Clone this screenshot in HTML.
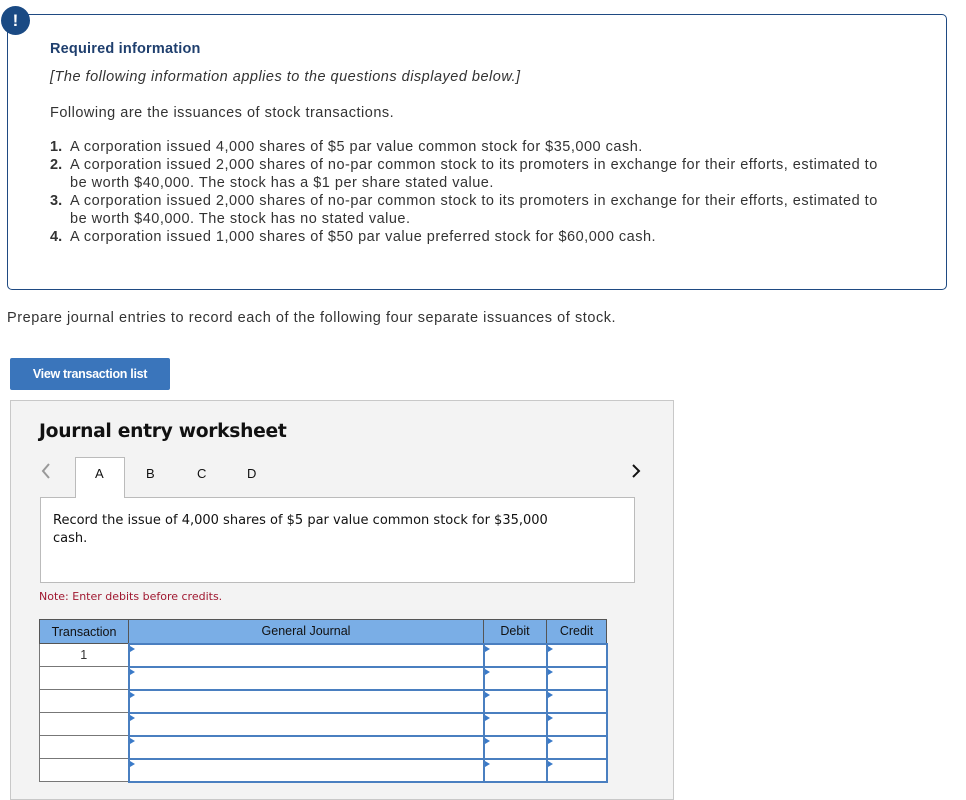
<!DOCTYPE html>
<html><head><meta charset="utf-8"><style>
*{box-sizing:border-box;margin:0;padding:0}
body{width:966px;height:784px;overflow:hidden;background:#fff;font-family:"Liberation Sans",Arial,sans-serif;position:relative;color:#333}
.info{position:absolute;left:7px;top:14px;width:940px;height:276px;border:1px solid #1f4a82;border-radius:5px}
.badge{position:absolute;left:1px;top:6px;width:29px;height:29px;border-radius:50%;background:#1a4a84;color:#fff;font-weight:bold;font-size:17px;text-align:center;line-height:29px}
.t{position:absolute;font-size:14.5px;color:#333;letter-spacing:0.5px}
ol{position:absolute;left:50px;top:138px;width:842px;font-size:14.5px;line-height:18px;list-style:none;letter-spacing:0.5px}
ol li{padding-left:20px;text-indent:-20px}
ol b{display:inline-block;width:20px;text-indent:0;letter-spacing:0}
.btn{position:absolute;left:10px;top:358px;width:160px;height:32px;background:#3a75bb;border-radius:2px;color:#fff;font-weight:bold;font-size:12.5px;line-height:32px;text-align:center;letter-spacing:-0.3px}
.panel{position:absolute;left:10px;top:400px;width:664px;height:400px;background:#f3f3f3;border:1px solid #c8c8c8}
.h{position:absolute;left:39px;top:421px;font-size:18.7px;font-weight:bold;color:#111;font-family:"DejaVu Sans",sans-serif;letter-spacing:-0.3px}
.tab{position:absolute;top:466px;font-size:13px;color:#111}
.tabA{position:absolute;left:75px;top:457px;width:50px;height:41px;background:#fff;border:1px solid #bbb;border-bottom:none;z-index:2}
.box{position:absolute;left:40px;top:497px;width:595px;height:86px;background:#fff;border:1px solid #bbb;font-family:"DejaVu Sans",sans-serif;font-size:13px;color:#111;padding:14px 12px;line-height:18px}
.note{position:absolute;left:39px;top:590px;font-family:"DejaVu Sans",sans-serif;font-size:11px;color:#a01830}
table{position:absolute;left:39px;top:619px;border-collapse:collapse;font-size:12.5px}
th{background:#7aaee6;border:1px solid #555;height:24px;font-weight:normal;color:#111}
td{height:23px;border:1px solid #777;background:#fff;position:relative}
td.i{border:2px solid #4a7fc0}
td.i:before{content:"";position:absolute;left:0;top:1px;border-left:5px solid #3a7ac8;border-top:3px solid transparent;border-bottom:3px solid transparent}
</style></head><body>
<div class="info"></div>
<div class="badge">!</div>
<div class="t" style="left:50px;top:41px;font-weight:bold;color:#1f3f6e;letter-spacing:0.2px">Required information</div>
<div class="t" style="left:50px;top:69px;font-style:italic">[The following information applies to the questions displayed below.]</div>
<div class="t" style="left:50px;top:105px">Following are the issuances of stock transactions.</div>
<ol>
<li><b>1.</b>A corporation issued 4,000 shares of $5 par value common stock for $35,000 cash.</li>
<li><b>2.</b>A corporation issued 2,000 shares of no-par common stock to its promoters in exchange for their efforts, estimated to be worth $40,000. The stock has a $1 per share stated value.</li>
<li><b>3.</b>A corporation issued 2,000 shares of no-par common stock to its promoters in exchange for their efforts, estimated to be worth $40,000. The stock has no stated value.</li>
<li><b>4.</b>A corporation issued 1,000 shares of $50 par value preferred stock for $60,000 cash.</li>
</ol>
<div class="t" style="left:7px;top:310px;letter-spacing:0.55px">Prepare journal entries to record each of the following four separate issuances of stock.</div>
<div class="btn">View transaction list</div>
<div class="panel"></div>
<div class="h">Journal entry worksheet</div>
<svg style="position:absolute;left:40px;top:462px" width="12" height="18"><path d="M9 2L3 9L9 16" stroke="#999" stroke-width="2" fill="none"/></svg>
<svg style="position:absolute;left:630px;top:462px" width="12" height="18"><path d="M3 3L9 9L3 15" stroke="#111" stroke-width="2" fill="none"/></svg>
<div class="tabA"></div>
<div class="tab" style="left:95px;z-index:3">A</div>
<div class="tab" style="left:146px">B</div>
<div class="tab" style="left:197px">C</div>
<div class="tab" style="left:247px">D</div>
<div class="box">Record the issue of 4,000 shares of $5 par value common stock for $35,000<br>cash.</div>
<div class="note">Note: Enter debits before credits.</div>
<table>
<tr><th style="width:89px">Transaction</th><th style="width:355px">General Journal</th><th style="width:63px">Debit</th><th style="width:60px">Credit</th></tr>
<tr><td style="text-align:center">1</td><td class="i"></td><td class="i"></td><td class="i"></td></tr>
<tr><td></td><td class="i"></td><td class="i"></td><td class="i"></td></tr>
<tr><td></td><td class="i"></td><td class="i"></td><td class="i"></td></tr>
<tr><td></td><td class="i"></td><td class="i"></td><td class="i"></td></tr>
<tr><td></td><td class="i"></td><td class="i"></td><td class="i"></td></tr>
<tr><td></td><td class="i"></td><td class="i"></td><td class="i"></td></tr>
</table>
</body></html>
